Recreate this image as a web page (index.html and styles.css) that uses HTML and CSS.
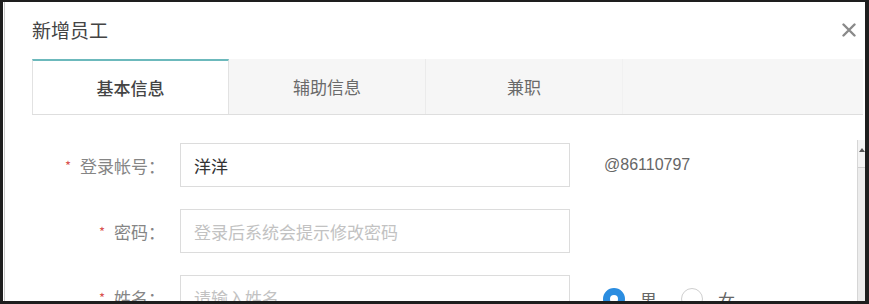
FILE: index.html
```html
<!DOCTYPE html>
<html lang="zh-CN">
<head>
<meta charset="utf-8">
<title>新增员工</title>
<link rel="stylesheet" href="styles.css">
</head>
<body>
<div class="screen">
  <div class="dialog">
    <div class="header">
      <span class="title">新增员工</span>
      <span class="close" aria-label="关闭">
        <svg width="14" height="14" viewBox="0 0 14 14"><path d="M1.5 1.5 L12.5 12.5 M12.5 1.5 L1.5 12.5" stroke="#8a8a8a" stroke-width="2.4" stroke-linecap="round"/></svg>
      </span>
    </div>
    <div class="tabs">
      <div class="tab active">基本信息</div>
      <div class="tab">辅助信息</div>
      <div class="tab last">兼职</div>
      <div class="tab-rest"></div>
    </div>
    <div class="body">
      <div class="form">
        <div class="row">
          <label class="label"><span class="req">*</span>登录帐号：</label>
          <div class="input value">洋洋</div>
          <div class="extra account">@86110797</div>
        </div>
        <div class="row">
          <label class="label"><span class="req">*</span>密码：</label>
          <div class="input placeholder">登录后系统会提示修改密码</div>
        </div>
        <div class="row">
          <label class="label"><span class="req">*</span>姓名：</label>
          <div class="input placeholder">请输入姓名</div>
          <div class="extra radios">
            <span class="radio checked"></span><span class="radio-text">男</span>
            <span class="radio"></span><span class="radio-text">女</span>
          </div>
        </div>
      </div>
      <div class="scrollbar">
        <div class="arrow"></div>
        <div class="thumb"></div>
      </div>
    </div>
  </div>
</div>
</body>
</html>
```

FILE: styles.css
```css
html, body {
  margin: 0;
  padding: 0;
  background: #1c1c1c;
}
body {
  font-family: "Noto Sans CJK SC", "Noto Sans", sans-serif;
}
.screen {
  width: 869px;
  height: 304px;
  box-sizing: border-box;
  border-top: 2px solid #1e1e1e;
  border-left: 3px solid #1e1e1e;
  border-right: 4px solid #1e1e1e;
  border-bottom: 3px solid #1e1e1e;
  background: #fff;
  overflow: hidden;
}
.dialog {
  height: 100%;
  margin-left: 1px;
  border-left: 1px solid #c9c9c9;
  display: flex;
  flex-direction: column;
}
.header {
  height: 57px;
  flex: none;
  display: flex;
  align-items: center;
  justify-content: space-between;
  padding: 0 9px 0 27px;
}
.title {
  font-size: 19px;
  line-height: 24px;
  color: #444;
  margin-top: -2px;
}
.close {
  display: flex;
  width: 14px;
  height: 14px;
  margin-top: -1px;
}
.tabs {
  flex: none;
  height: 56px;
  box-sizing: border-box;
  margin: 0 2px 0 27px;
  display: flex;
  background: #f6f6f6;
  border-bottom: 1px solid #dedede;
}
.tab {
  width: 197px;
  box-sizing: border-box;
  display: flex;
  align-items: center;
  justify-content: center;
  font-size: 17px;
  color: #6a6a6a;
  border-right: 1px solid #ebebeb;
}
.tab.last {
  border-right-color: #f1f1f1;
}
.tab.active {
  background: #fff;
  color: #444;
  border-top: 2px solid #6cb9bc;
  border-left: 1px solid #e2e2e2;
  border-right: 1px solid #e2e2e2;
  font-weight: 500;
}
.tab-rest {
  flex: 1;
}
.body {
  flex: 1;
  min-height: 0;
  display: flex;
  overflow: hidden;
}
.form {
  flex: 1;
  padding-top: 28px;
  display: flex;
  flex-direction: column;
  gap: 22px;
}
.row {
  display: flex;
  align-items: center;
  height: 44px;
  flex: none;
}
.label {
  width: 160px;
  margin-right: 15px;
  text-align: right;
  font-size: 17px;
  color: #858585;
  white-space: nowrap;
}
.req {
  color: #d9534f;
  font-size: 13px;
  margin-right: 9px;
  vertical-align: 2px;
}
.input {
  width: 390px;
  height: 44px;
  box-sizing: border-box;
  border: 1px solid #dcdcdc;
  padding-left: 13px;
  display: flex;
  align-items: center;
  font-size: 17px;
}
.value {
  color: #333;
}
.placeholder {
  color: #c2c2c2;
}
.extra {
  margin-left: 34px;
}
.account {
  font-family: "Liberation Sans", Arial, sans-serif;
  font-size: 16px;
  color: #666;
}
.radios {
  display: flex;
  align-items: center;
  padding-top: 4px;
  margin-left: 33px;
}
.radio {
  width: 22px;
  height: 22px;
  box-sizing: border-box;
  border-radius: 50%;
  border: 1px solid #cfcfcf;
  background: #fff;
}
.radio.checked {
  border: 7px solid #2b8de0;
  background: #fff;
}
.radio-text {
  font-size: 17px;
  color: #666;
  margin: 0 24px 0 15px;
}
.scrollbar {
  flex: none;
  width: 8px;
  margin-top: 25px;
  box-sizing: border-box;
  border-left: 1px solid #d6d6d6;
  background: #f3f3f3;
  display: flex;
  flex-direction: column;
  align-items: center;
}
.arrow {
  margin-top: 8px;
  width: 0;
  height: 0;
  border-left: 3px solid transparent;
  border-right: 3px solid transparent;
  border-bottom: 4px solid #555;
}
.thumb {
  margin-top: 15px;
  align-self: stretch;
  flex: 1;
  border-top: 1px solid #cfcfcf;
  background: #ececec;
}
```
